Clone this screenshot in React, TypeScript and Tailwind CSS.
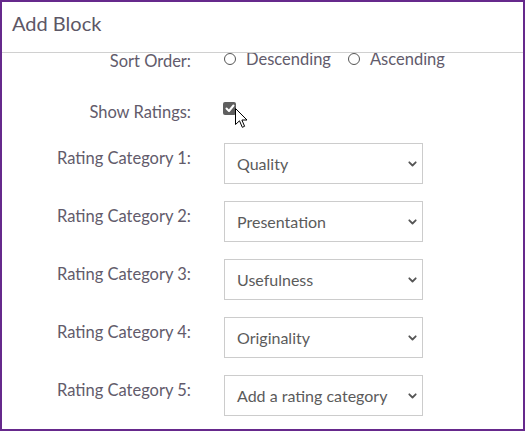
import React from "react";

const FONT = { fontFamily: "Lato, 'Noto Sans', sans-serif" };

function Chevron() {
  return (
    <svg width="9" height="6" viewBox="0 0 9 6" className="absolute right-[5px] top-1/2 -translate-y-1/2 pointer-events-none">
      <path d="M1.3 1.3 L4.5 4.5 L7.7 1.3" fill="none" stroke="#555" strokeWidth="1.8" strokeLinecap="round" strokeLinejoin="round" />
    </svg>
  );
}

function SelectRow({ label, value }: { label: string; value: string }) {
  return (
    <div className="flex items-start">
      <div className="w-[189px] shrink-0 text-right text-[16.5px] leading-[22px] pt-[4px] text-[#625b6b]">{label}</div>
      <div className="ml-[33px] relative w-[199px] h-[41px] border border-[#cccccc] bg-white flex items-center pl-[12px] text-[16px] text-[#5b5b5b]">
        <span>{value}</span>
        <Chevron />
      </div>
    </div>
  );
}

function Radio({ label }: { label: string }) {
  return (
    <div className="flex items-start">
      <div className="mt-[5px] w-[12px] h-[12px] rounded-full border border-[#555] bg-white" />
      <span className="ml-[10px] text-[16.5px] leading-[22px] text-[#625b6b]">{label}</span>
    </div>
  );
}

export default function App() {
  return (
    <div className="w-[525px] h-[431px] box-border border-2 border-[#66298c] bg-white overflow-hidden relative" style={FONT}>
      <div className="h-[51px] border-b border-[#d0d0d0] pt-[9px] pl-[10px] text-[20px] leading-[24px] text-[#5d5766] relative z-10 bg-transparent">
        Add Block
      </div>
      <div className="flex flex-col">
        <div className="flex items-start -mt-[5px]">
          <div className="w-[189px] shrink-0 text-right text-[16.5px] leading-[22px] pt-[2px] text-[#625b6b]">Sort Order:</div>
          <div className="ml-[33px] flex gap-[17px]">
            <Radio label="Descending" />
            <Radio label="Ascending" />
          </div>
        </div>
        <div className="flex items-start mt-[28px]">
          <div className="w-[189px] shrink-0 text-right text-[16.5px] leading-[22px] pt-[1px] text-[#625b6b]">Show Ratings:</div>
          <div className="ml-[32px] mt-[2px] w-[13px] h-[13px] rounded-[2px] bg-[#5f5f5f] flex items-center justify-center">
            <svg width="10" height="9" viewBox="0 0 10 9">
              <path d="M1.5 4.5 L4 7 L8.5 1.5" fill="none" stroke="#fff" strokeWidth="2" strokeLinecap="round" strokeLinejoin="round" />
            </svg>
          </div>
        </div>
        <div className="flex flex-col gap-[17px] mt-[20px]">
          <SelectRow label="Rating Category 1:" value="Quality" />
          <SelectRow label="Rating Category 2:" value="Presentation" />
          <SelectRow label="Rating Category 3:" value="Usefulness" />
          <SelectRow label="Rating Category 4:" value="Originality" />
          <SelectRow label="Rating Category 5:" value="Add a rating category" />
        </div>
      </div>
      <svg width="14" height="21" viewBox="0 0 14 21" className="absolute left-[233px] top-[106px]">
        <path d="M0.5 0.5 L0.5 16.5 L4.5 12.8 L7.3 19.3 L9.6 18.3 L6.9 12 L12 12 Z" fill="#fff" stroke="#000" strokeWidth="1" strokeLinejoin="round" />
      </svg>
    </div>
  );
}
